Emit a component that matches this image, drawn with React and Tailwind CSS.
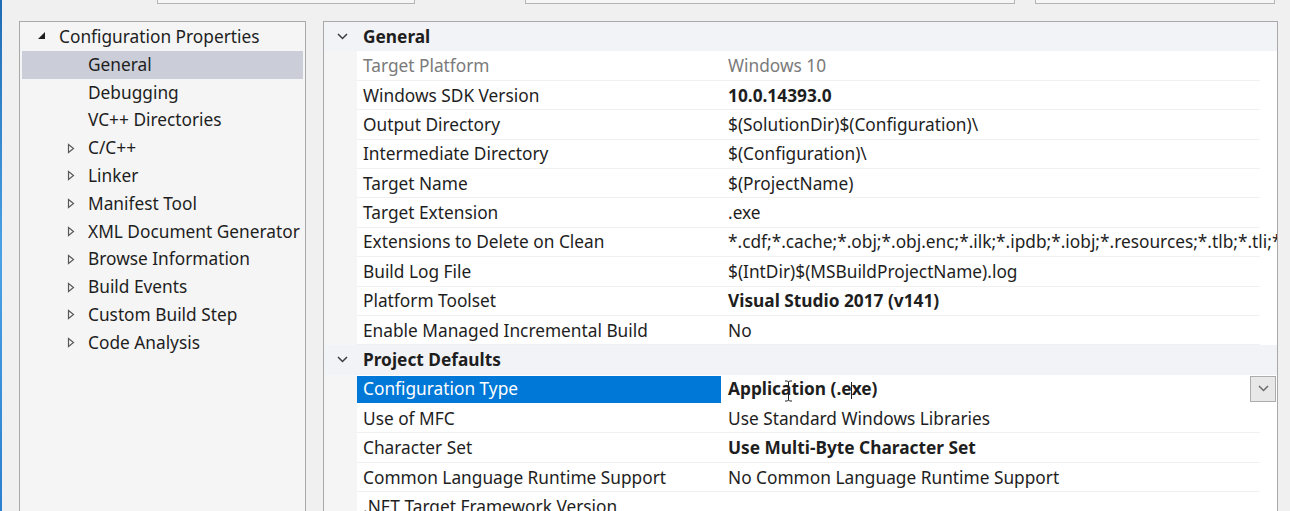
import React from "react";

const font = { fontFamily: '"Noto Sans", "Open Sans", sans-serif' };

function Collapsed() {
  return (
    <svg width="8" height="11" viewBox="0 0 8 11" className="shrink-0">
      <path d="M1.5 1.5 L6.5 5.5 L1.5 9.5 Z" fill="none" stroke="#595959" strokeWidth="1.2" />
    </svg>
  );
}

function Expanded() {
  return (
    <svg width="9" height="9" viewBox="0 0 9 9" className="shrink-0">
      <path d="M8 1 L8 8 L1 8 Z" fill="#1e1e1e" />
    </svg>
  );
}

function Chevron({ color = "#3c3c3c" }) {
  return (
    <svg width="11" height="7" viewBox="0 0 11 7">
      <path d="M1 1 L5.5 5.5 L10 1" fill="none" stroke={color} strokeWidth="1.5" />
    </svg>
  );
}

function IBeam() {
  return (
    <svg width="9" height="22" viewBox="0 0 9 22" className="absolute left-[56px] top-[4px]">
      <path d="M1 1 H3.5 L4.5 2 L5.5 1 H8 M4.5 2 V20 M1 21 H3.5 L4.5 20 L5.5 21 H8" fill="none" stroke="#1e1e1e" strokeWidth="1" />
    </svg>
  );
}

const tree = [
  { label: "Configuration Properties", level: 0, icon: "exp" },
  { label: "General", level: 1, selected: true },
  { label: "Debugging", level: 1 },
  { label: "VC++ Directories", level: 1 },
  { label: "C/C++", level: 1, icon: "col" },
  { label: "Linker", level: 1, icon: "col" },
  { label: "Manifest Tool", level: 1, icon: "col" },
  { label: "XML Document Generator", level: 1, icon: "col" },
  { label: "Browse Information", level: 1, icon: "col" },
  { label: "Build Events", level: 1, icon: "col" },
  { label: "Custom Build Step", level: 1, icon: "col" },
  { label: "Code Analysis", level: 1, icon: "col" },
];

const general = [
  ["Target Platform", "Windows 10", "gray"],
  ["Windows SDK Version", "10.0.14393.0", "bold"],
  ["Output Directory", "$(SolutionDir)$(Configuration)\\"],
  ["Intermediate Directory", "$(Configuration)\\"],
  ["Target Name", "$(ProjectName)"],
  ["Target Extension", ".exe"],
  ["Extensions to Delete on Clean", "*.cdf;*.cache;*.obj;*.obj.enc;*.ilk;*.ipdb;*.iobj;*.resources;*.tlb;*.tli;*.t"],
  ["Build Log File", "$(IntDir)$(MSBuildProjectName).log"],
  ["Platform Toolset", "Visual Studio 2017 (v141)", "bold"],
  ["Enable Managed Incremental Build", "No"],
];

const defaults = [
  ["Configuration Type", "Application (.exe)", "selected"],
  ["Use of MFC", "Use Standard Windows Libraries"],
  ["Character Set", "Use Multi-Byte Character Set", "bold"],
  ["Common Language Runtime Support", "No Common Language Runtime Support"],
  [".NET Target Framework Version", ""],
];

function Header({ label }) {
  return (
    <div className="flex h-[29.4px] items-center bg-[#f2f3f6] shrink-0">
      <div className="w-[33px] flex justify-center pl-[3px]">
        <Chevron />
      </div>
      <div className="pl-[6px] font-bold text-[#1e1e1e]">{label}</div>
    </div>
  );
}

function Row({ name, value, kind }) {
  const selected = kind === "selected";
  return (
    <div className="flex h-[29.4px] shrink-0 bg-[#f5f5f6]">
      <div className="w-[33px] shrink-0" />
      <div className="flex-1 flex bg-white relative min-w-0">
        <div
          className={
            "w-[364px] shrink-0 flex items-center pl-[6px] " +
            (selected ? "bg-[#0078d7] text-white my-[1.5px]" : kind === "gray" ? "text-[#7a7a7a]" : "text-[#1e1e1e]")
          }
        >
          <span className="whitespace-nowrap">{name}</span>
        </div>
        <div
          className={
            "flex-1 flex items-center pl-[7px] whitespace-nowrap overflow-hidden min-w-0 " +
            (kind === "gray" ? "text-[#7a7a7a]" : "text-[#1e1e1e]") +
            (kind === "bold" || selected ? " font-bold" : "")
          }
        >
          {selected ? (
            <span className="relative">
              Application (.e
              <span className="inline-block w-[1px] h-[17px] bg-[#1e1e1e] align-middle -mx-[0.5px]" />
              xe)
              <IBeam />
            </span>
          ) : (
            value
          )}
        </div>
        {selected && (
          <div className="absolute right-[1px] top-[1px] w-[26px] h-[26px] border border-[#adadad] bg-[#e8e8e8] flex items-center justify-center">
            <Chevron color="#6a6a6a" />
          </div>
        )}
        {!selected && <div className="absolute left-0 right-[17px] bottom-0 h-[1px] bg-[#f0f0f0]" />}
      </div>
    </div>
  );
}

export default function App() {
  return (
    <div className="w-[1290px] h-[511px] bg-[#f0f0f0] overflow-hidden flex text-[17.3px]" style={font}>
      <div className="w-[2px] shrink-0 bg-gradient-to-b from-[#1f6cb5] via-[#4aa2e6] to-[#2b7fcf]" />
      <div className="flex-1 flex flex-col">
        <div className="h-[21px] shrink-0 flex items-start">
          <div className="ml-[155px] w-[258px] h-[4px] bg-[#f6f6f6] border border-t-0 border-[#b4b4b4]" />
          <div className="ml-[110px] w-[490px] h-[4px] bg-[#f6f6f6] border border-t-0 border-[#b4b4b4]" />
          <div className="ml-[20px] w-[240px] h-[4px] bg-[#f6f6f6] border border-t-0 border-[#b4b4b4]" />
        </div>
        <div className="flex-1 flex min-h-0">
          <div className="ml-[17px] w-[287px] shrink-0 border border-b-0 border-[#a9a9a9] bg-[#f5f5f5] pt-[1px] px-[2px] flex flex-col">
            {tree.map((t) => (
              <div
                key={t.label}
                className={
                  "h-[27.8px] shrink-0 flex items-center text-[#1e1e1e] whitespace-nowrap " +
                  (t.selected ? "bg-[#cbcdd8]" : "")
                }
              >
                {t.level === 0 ? (
                  <div className="pl-[15px] flex items-center">
                    <span className="w-[9px] flex items-center -mt-[2px]">
                      <Expanded />
                    </span>
                    <span className="ml-[13px]">{t.label}</span>
                  </div>
                ) : (
                  <div className="pl-[45px] flex items-center">
                    <span className="w-[9px] flex items-center">{t.icon === "col" ? <Collapsed /> : null}</span>
                    <span className="ml-[12px]">{t.label}</span>
                  </div>
                )}
              </div>
            ))}
          </div>
          <div className="ml-[17px] w-[955px] shrink-0 border border-b-0 border-[#a9a9a9] bg-white flex flex-col overflow-hidden">
            <Header label="General" />
            {general.map(([n, v, k]) => (
              <Row key={n} name={n} value={v} kind={k} />
            ))}
            <Header label="Project Defaults" />
            {defaults.map(([n, v, k]) => (
              <Row key={n} name={n} value={v} kind={k} />
            ))}
          </div>
        </div>
      </div>
    </div>
  );
}
